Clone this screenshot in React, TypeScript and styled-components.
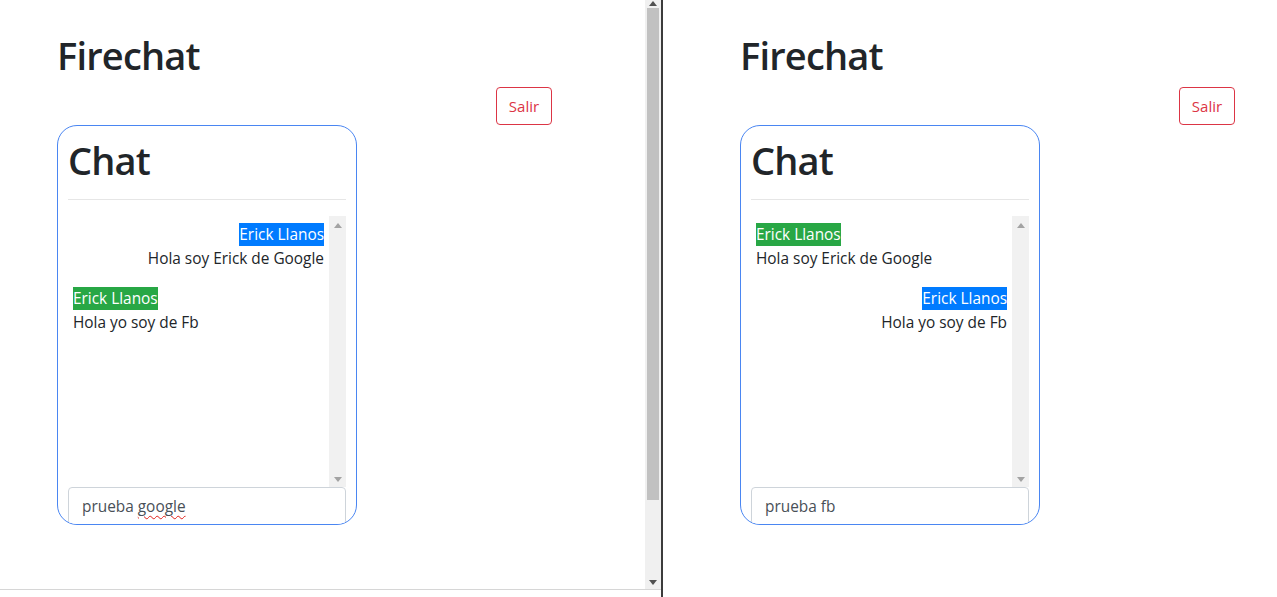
import React from "react";
import styled, { createGlobalStyle } from "styled-components";

const Global = createGlobalStyle`
  html, body { margin: 0; padding: 0; background: #fff; }
  body {
    font-family: "Open Sans", "Noto Sans", sans-serif;
    color: #212529;
    overflow: hidden;
  }
  * { box-sizing: border-box; }
`;

const Screen = styled.div`
  display: flex;
  width: 1277px;
  height: 597px;
  overflow: hidden;
`;

const LeftWindow = styled.div`
  width: 661px;
  display: flex;
  flex-direction: column;
`;

const Viewport = styled.div`
  display: flex;
  height: 589px;
`;

const BottomStrip = styled.div`
  flex: 1;
  border-top: 1px solid #d6d6d6;
  background: #fff;
`;

const Divider = styled.div`
  width: 2px;
  background: #3c3c3c;
`;

const RightWindow = styled.div`
  flex: 1;
  display: flex;
`;

const Page = styled.div<{ $offset: number }>`
  flex: 1;
  min-width: 0;
  padding: 31px 0 0 ${(p) => p.$offset}px;
`;

const Title = styled.h1`
  margin: 0 0 8px;
  font-size: 38px;
  line-height: 48px;
  font-weight: 600;
  letter-spacing: -0.8px;
  color: #212529;
`;

const ActionRow = styled.div`
  width: 495px;
  display: flex;
  justify-content: flex-end;
`;

const OutlineDanger = styled.button`
  height: 38px;
  width: 56px;
  padding: 0;
  border: 1px solid #dc3545;
  border-radius: 4px;
  background: #fff;
  color: #dc3545;
  font-family: inherit;
  font-size: 15px;
  line-height: 24px;
`;

const Card = styled.div`
  width: 300px;
  height: 400px;
  border: 1px solid #4a86f2;
  border-radius: 20px;
  padding: 10px 10px 0;
  overflow: hidden;
  display: flex;
  flex-direction: column;
`;

const CardTitle = styled.h1`
  margin: 0;
  font-size: 38px;
  line-height: 48px;
  font-weight: 600;
  letter-spacing: -0.8px;
`;

const Rule = styled.hr`
  margin: 15px 0 16px;
  border: 0;
  border-top: 1px solid #e6e6e6;
  width: 100%;
`;

const Messages = styled.div`
  display: flex;
  height: 271px;
  flex-shrink: 0;
`;

const MessageList = styled.div`
  flex: 1;
  padding: 7px 5px 5px;
  font-size: 15.4px;
  line-height: 24px;
`;

const Message = styled.div<{ $mine: boolean }>`
  text-align: ${(p) => (p.$mine ? "right" : "left")};
  margin-bottom: 16px;
`;

const Author = styled.div``;

const Badge = styled.span<{ $mine: boolean }>`
  background: ${(p) => (p.$mine ? "#007bff" : "#28a745")};
  color: #fff;
  padding: 1px 0;
`;

const Body = styled.div`
  color: #212529;
`;

const InnerScroll = styled.div`
  width: 17px;
  background: #f1f1f1;
  display: flex;
  flex-direction: column;
  justify-content: space-between;
  align-items: center;
  padding: 7px 0 5px;
`;

const Field = styled.div`
  flex-shrink: 0;
  height: 38px;
  border: 1px solid #ced4da;
  border-radius: 4px;
  padding: 7px 13px 5px;
  font-size: 15.4px;
  line-height: 24px;
  color: #495057;
  background: #fff;
`;

const Misspelled = styled.span`
  text-decoration: underline wavy #e0201a;
  text-decoration-thickness: 1px;
  text-underline-offset: 3px;
`;

const PageScroll = styled.div`
  width: 16px;
  background: #f0f0f0;
  display: flex;
  flex-direction: column;
  align-items: center;
  padding: 1px 0 4px;
`;

const Thumb = styled.div`
  width: 12px;
  height: 492px;
  margin-top: 2px;
  background: #c1c1c1;
`;

const ScrollSpacer = styled.div`
  flex: 1;
`;

const Arrow = ({ up, color }: { up: boolean; color: string }) => (
  <svg width="8" height="5" viewBox="0 0 8 5">
    <polygon points={up ? "0,5 8,5 4,0" : "0,0 8,0 4,5"} fill={color} />
  </svg>
);

type Msg = { mine: boolean; text: string };

const ChatPane = ({
  offset,
  msgs,
  draft,
}: {
  offset: number;
  msgs: Msg[];
  draft: React.ReactNode;
}) => (
  <Page $offset={offset}>
    <Title>Firechat</Title>
    <ActionRow>
      <OutlineDanger>Salir</OutlineDanger>
    </ActionRow>
    <Card>
      <CardTitle>Chat</CardTitle>
      <Rule />
      <Messages>
        <MessageList>
          {msgs.map((m, i) => (
            <Message key={i} $mine={m.mine}>
              <Author>
                <Badge $mine={m.mine}>Erick Llanos</Badge>
              </Author>
              <Body>{m.text}</Body>
            </Message>
          ))}
        </MessageList>
        <InnerScroll>
          <Arrow up color="#a3a3a3" />
          <Arrow up={false} color="#a3a3a3" />
        </InnerScroll>
      </Messages>
      <Field>{draft}</Field>
    </Card>
  </Page>
);

export default function App() {
  return (
    <>
      <Global />
      <Screen>
        <LeftWindow>
          <Viewport>
            <ChatPane
              offset={57}
              msgs={[
                { mine: true, text: "Hola soy Erick de Google" },
                { mine: false, text: "Hola yo soy de Fb" },
              ]}
              draft={
                <>
                  prueba <Misspelled>google</Misspelled>
                </>
              }
            />
            <PageScroll>
              <Arrow up color="#505050" />
              <Thumb />
              <ScrollSpacer />
              <Arrow up={false} color="#505050" />
            </PageScroll>
          </Viewport>
          <BottomStrip />
        </LeftWindow>
        <Divider />
        <RightWindow>
          <ChatPane
            offset={77}
            msgs={[
              { mine: false, text: "Hola soy Erick de Google" },
              { mine: true, text: "Hola yo soy de Fb" },
            ]}
            draft="prueba fb"
          />
        </RightWindow>
      </Screen>
    </>
  );
}
